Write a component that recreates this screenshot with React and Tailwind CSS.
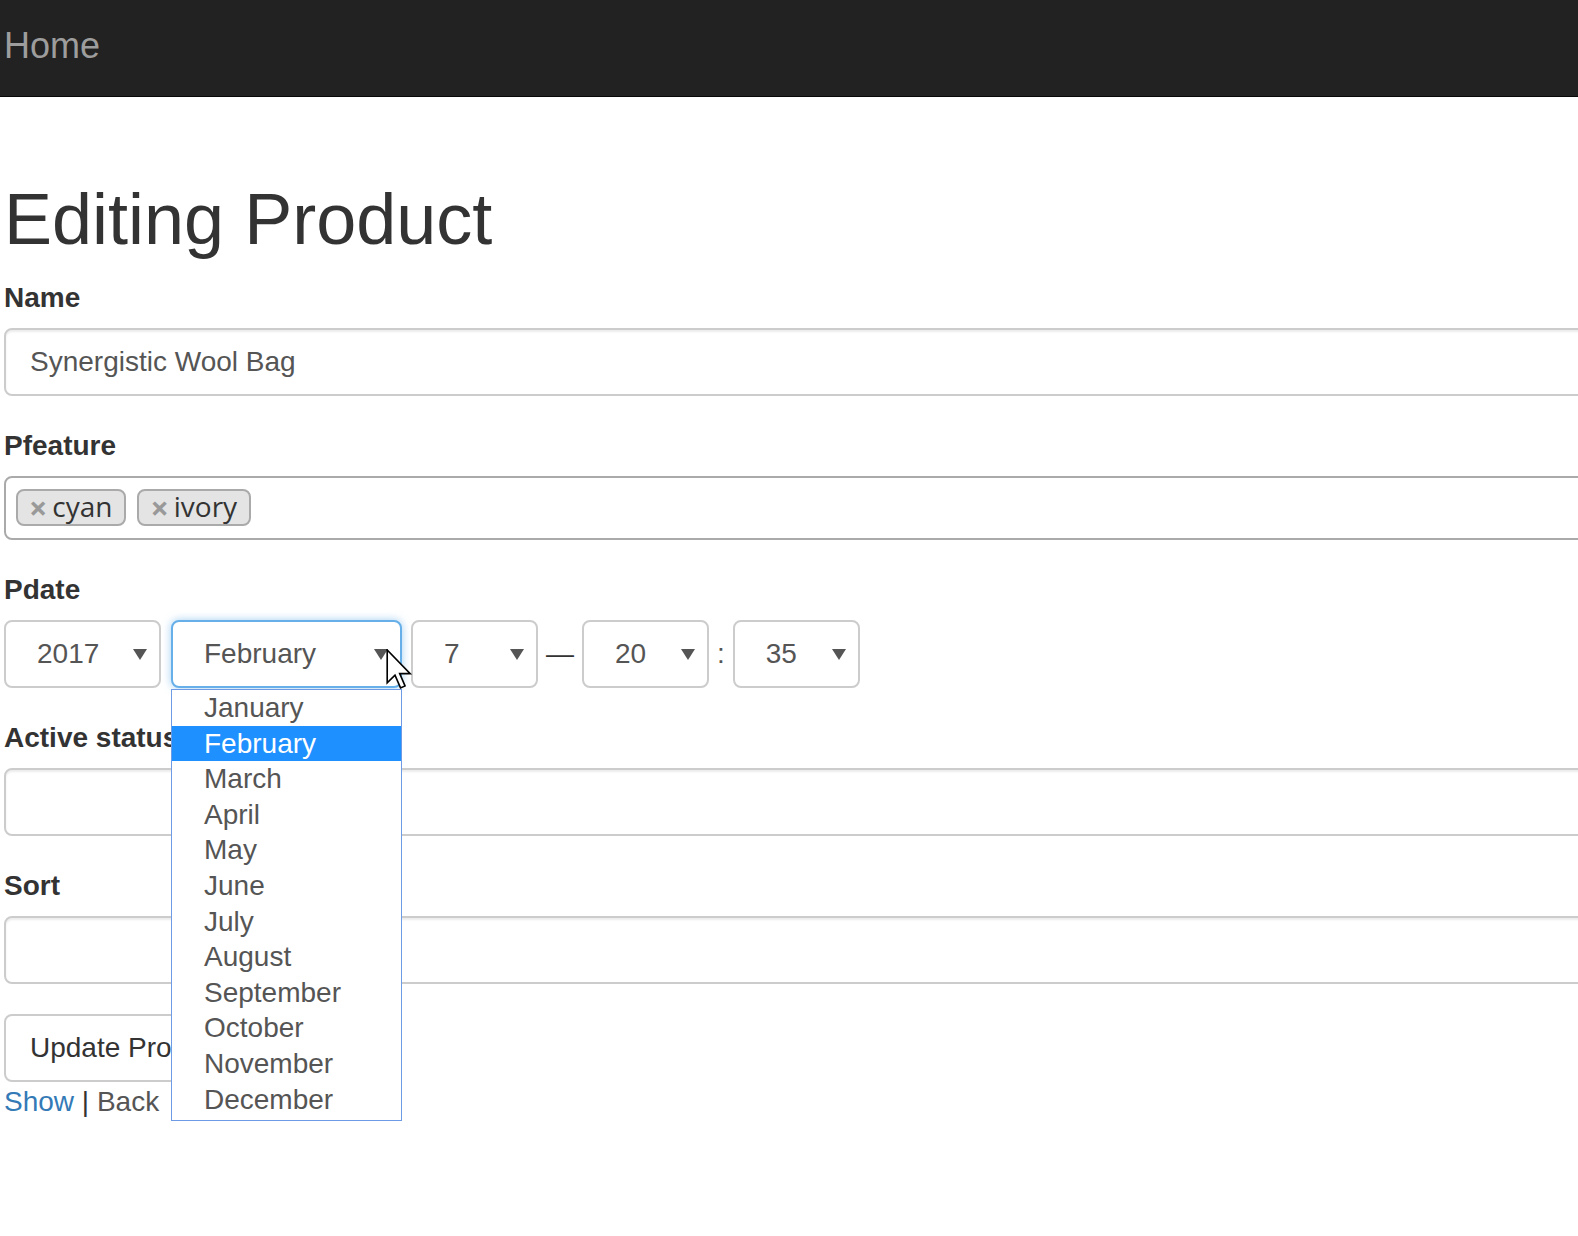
import React from 'react';

const months = [
  'January', 'February', 'March', 'April', 'May', 'June',
  'July', 'August', 'September', 'October', 'November', 'December',
];

function Arrow() {
  return (
    <svg width="14" height="11" viewBox="0 0 14 11" className="shrink-0">
      <path d="M0 0 L14 0 L7 11 Z" fill="#555" />
    </svg>
  );
}

function Select({ value, width, focused }) {
  return (
    <div
      className={`flex h-[68px] items-center justify-between rounded-[8px] border-2 bg-white pl-[31px] pr-[12px] text-[28px] text-[#555] ${
        focused
          ? 'border-[#66afe9] shadow-[0_0_8px_rgba(102,175,233,0.6)]'
          : 'border-[#ccc]'
      }`}
      style={{ width }}
    >
      <span>{value}</span>
      <Arrow />
    </div>
  );
}

function Tag({ text }) {
  return (
    <div className="flex h-[37px] items-center rounded-[8px] border-2 border-[#aaa] bg-[#e4e4e4] pl-[11px] pr-[12px] font-['Open_Sans','DejaVu_Sans',sans-serif] text-[28px] leading-none text-[#333]">
      <span className="mr-[5px] text-[32px] font-bold text-[#999]">×</span>
      <span className="pb-[3px]">{text}</span>
    </div>
  );
}

function Label({ children }) {
  return <div className="mb-[10px] h-[40px] leading-[40px] font-bold text-[#333]">{children}</div>;
}

export default function App() {
  return (
    <div className="relative min-h-[1236px] w-full overflow-hidden bg-white font-['Liberation_Sans',Arial,sans-serif] text-[28px] text-[#333]">
      {/* Navbar */}
      <div className="flex h-[97px] items-center border-b border-[#080808] bg-[#222] pb-[4px] pl-[4px]">
        <span className="text-[36px] text-[#9d9d9d]">Home</span>
      </div>

      <div className="w-[1700px] pl-[4px]">
        <h1 className="mt-[83px] mb-[19px] text-[72px] leading-[79px] text-[#333]">Editing Product</h1>

        {/* Name */}
        <Label>Name</Label>
        <div className="flex h-[68px] items-center rounded-[8px] border-2 border-[#ccc] px-[24px] text-[#555] shadow-[inset_0_2px_2px_rgba(0,0,0,0.075)]">
          Synergistic Wool Bag
        </div>

        {/* Pfeature */}
        <div className="mt-[30px]">
          <Label>Pfeature</Label>
          <div className="flex h-[64px] items-start gap-[11px] rounded-[8px] border-2 border-[#aaa] pl-[10px] pt-[11px]">
            <Tag text="cyan" />
            <Tag text="ivory" />
          </div>
        </div>

        {/* Pdate */}
        <div className="mt-[30px]">
          <Label>Pdate</Label>
          <div className="flex items-center">
            <Select value="2017" width={157} />
            <div className="ml-[10px]">
              <Select value="February" width={231} focused />
            </div>
            <div className="ml-[9px]">
              <Select value="7" width={127} />
            </div>
            <span className="mx-[8px] text-[#333]">—</span>
            <Select value="20" width={127} />
            <span className="mx-[8px] text-[#555]">:</span>
            <Select value="35" width={127} />
          </div>
        </div>

        {/* Active status */}
        <div className="mt-[30px]">
          <Label>Active status</Label>
          <div className="h-[68px] rounded-[8px] border-2 border-[#ccc] shadow-[inset_0_2px_2px_rgba(0,0,0,0.075)]" />
        </div>

        {/* Sort */}
        <div className="mt-[30px]">
          <Label>Sort</Label>
          <div className="h-[68px] rounded-[8px] border-2 border-[#ccc] shadow-[inset_0_2px_2px_rgba(0,0,0,0.075)]" />
        </div>

        <button className="mt-[30px] flex h-[68px] items-center rounded-[8px] border-2 border-[#ccc] bg-white px-[24px] text-[#333]">
          Update Product
        </button>
        <div className="h-[40px] leading-[40px]">
          <span className="text-[#337ab7]">Show</span>
          <span className="text-[#333]"> | </span>
          <span className="text-[#555]">Back</span>
        </div>
      </div>

      {/* Open month dropdown */}
      <div className="absolute left-[171px] top-[689px] w-[231px] border-[1.5px] border-[#6f9be4] bg-white pb-[3px] text-[28px] text-[#555]">
        {months.map((m) => (
          <div
            key={m}
            className={`h-[35.6px] pl-[32px] leading-[35.6px] ${
              m === 'February' ? 'bg-[#1e90ff] text-white' : ''
            }`}
          >
            {m}
          </div>
        ))}
      </div>

      {/* Mouse cursor */}
      <svg className="absolute left-[386px] top-[649px]" width="27" height="41" viewBox="0 0 13 20">
        <path
          d="M0.5 0.5 L0.5 16.5 L4.3 12.8 L7 19 L9.2 18 L6.6 12 L11.7 12 Z"
          fill="white"
          stroke="black"
          strokeWidth="0.8"
          strokeLinejoin="miter"
        />
      </svg>
    </div>
  );
}
